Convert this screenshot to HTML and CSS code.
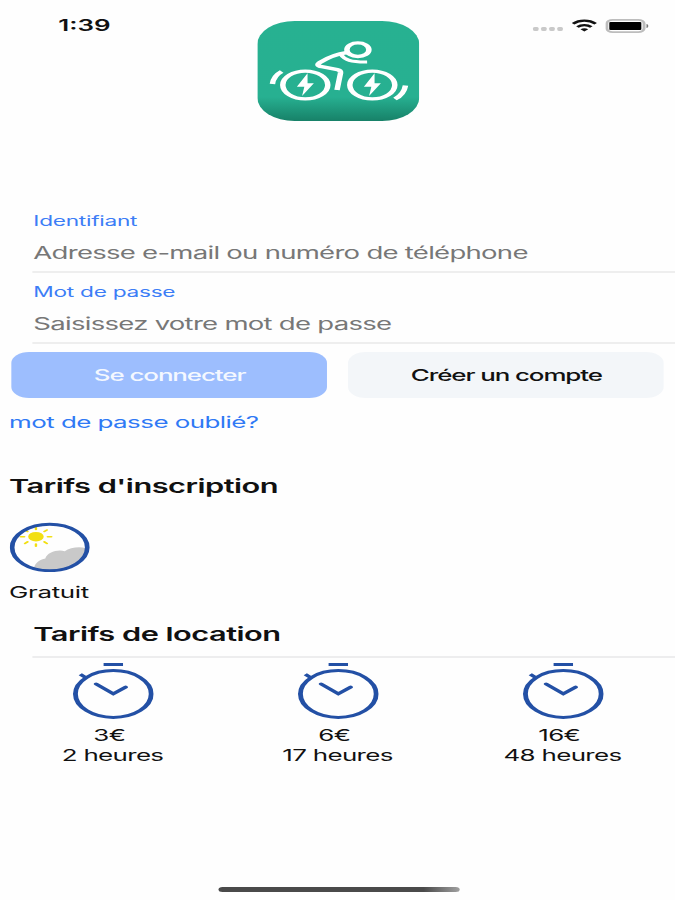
FILE: index.html
```html
<!DOCTYPE html>
<html lang="fr">
<head>
    <meta charset="UTF-8">
    <meta name="viewport" content="width=device-width, initial-scale=1.0">
    <title>Connexion</title>
    <link rel="stylesheet" href="styles.css">
</head>
<body>
    <!-- Shared icon -->
    <svg class="sprite">
        <symbol id="stopwatch" viewBox="0 0 50 58">
            <g fill="none" stroke="#2350a5">
                <circle cx="25" cy="32" r="23.4" stroke-width="3"/>
                <path d="M19 2.6h12" stroke-width="3"/>
                <path d="M4.600 12.300l4 4" stroke-width="2.800"/>
                <path d="M14.4 22L25 31.8l7.6-6.6" stroke-width="3" stroke-linecap="round"/>
            </g>
        </symbol>
    </svg>

    <div class="screen">
        <header>
            <div class="time">1:39</div>
            <svg class="logo" viewBox="0 0 100 100">
                <defs>
                    <linearGradient id="green" x1="0" y1="0" x2="0" y2="1">
                        <stop offset="0" stop-color="#27b191"/>
                        <stop offset="0.76" stop-color="#27b091"/>
                        <stop offset="1" stop-color="#178168"/>
                    </linearGradient>
                </defs>
                <rect width="100" height="100" rx="23" fill="url(#green)"/>
                <g fill="none" stroke="#fff" stroke-width="3.4">
                    <circle cx="29.6" cy="64" r="13.9"/>
                    <circle cx="71" cy="64" r="13.9"/>
                    <circle cx="62.1" cy="28.7" r="6.8"/>
                    <path d="M55.5 31.5C49 33 43 37 38.6 41.5c-2 2.2-1.4 3.4 1.2 4.2l9.6 3c1.7.6 2.1 1.6 2 3.2L49.2 69"/>
                    <path d="M51.5 33.5c2.5 5.500 6 7.700 16.300 7.500" stroke-width="2.900"/>
                    <path d="M15 50.500C11.500 53.500 9.800 57.500 9.300 63"/>
                    <path d="M91.500 64.500c-.6 6-2.800 10.500-6.500 13.500"/>
                </g>
                <path fill="#fff" d="M31 52.300l-6.600 13.400H29L27.600 75l7.300-12.700H31z"/>
                <path fill="#fff" d="M72.400 52.300l-6.600 13.400h4.600L69 75l7.300-12.700h-3.900z"/>
            </svg>
            <div class="status">
                <svg class="dots" viewBox="0 0 19 5">
                    <g fill="#c9c9c9">
                        <rect x="0.3" width="3.4" height="4" rx="1.2"/>
                        <rect x="5.3" width="3.4" height="4" rx="1.2"/>
                        <rect x="10.3" width="3.4" height="4" rx="1.2"/>
                        <rect x="15.3" width="3.4" height="4" rx="1.2"/>
                    </g>
                </svg>
                <svg class="wifi" viewBox="0 0 16 13">
                    <g fill="none" stroke="#111" stroke-width="2.2">
                        <path d="M1 4.700C5 .6 11 .6 15 4.700"/>
                        <path d="M3.700 8C6.200 5.500 9.800 5.500 12.300 8"/>
                    </g>
                    <path fill="#111" d="M8 12.600L5.600 10.200C7 9 9 9 10.400 10.200z"/>
                </svg>
                <svg class="battery" viewBox="0 0 27 14">
                    <rect x="0.9" y="0.9" width="23" height="12.2" rx="3.6" fill="#fff" stroke="#bdbdbd" stroke-width="1.8"/>
                    <rect x="2.4" y="3" width="19.800" height="8" rx="0.800" fill="#000"/>
                    <path fill="#777" d="M25.400 5c1.500.7 1.500 3.300 0 4z"/>
                </svg>
            </div>
        </header>

        <main>
            <!-- Login form -->
            <form>
                <div class="field">
                    <label>Identifiant</label>
                    <p>Adresse e-mail ou numéro de téléphone</p>
                </div>
                <div class="field">
                    <label>Mot de passe</label>
                    <p>Saisissez votre mot de passe</p>
                </div>
                <div class="buttons">
                    <button type="button" class="login">Se connecter</button>
                    <button type="button" class="signup">Créer un compte</button>
                </div>
                <a class="forgot" href="#">mot de passe oublié?</a>
            </form>

            <section class="inscription">
                <h2>Tarifs d'inscription</h2>
                <svg class="weather" viewBox="0 0 50 50">
                    <defs>
                        <clipPath id="disc"><circle cx="24.7" cy="25.5" r="23"/></clipPath>
                    </defs>
                    <g clip-path="url(#disc)">
                        <circle cx="16.200" cy="14.700" r="4.800" fill="#f2df12"/>
                        <g stroke="#f2df12" stroke-width="1.500" stroke-linecap="round">
                            <path d="M16.200 7.400V5.500M16.200 22v2.200M9 14.700H6.800M23.500 14.700h2.200M11 9.500L9.500 8M21.400 9.500L23 8M11 19.900l-1.600 1.600M21.400 19.900l1.600 1.600"/>
                        </g>
                        <path fill="#c9c9c9" d="M15 50c-.6-6 1.500-11.500 7-13.500 1-6 7.500-9.500 12-7.300 3-3.700 9-4.700 12.500-3.200L50 28v22z"/>
                    </g>
                    <circle cx="24.700" cy="25.500" r="23.200" fill="none" stroke="#2350a5" stroke-width="2.900"/>
                </svg>
                <p>Gratuit</p>
            </section>

            <section class="location">
                <h2>Tarifs de location</h2>
                <div class="rates">
                    <div class="rate">
                        <svg><use href="#stopwatch"/></svg>
                        <p class="price">3€</p>
                        <p>2 heures</p>
                    </div>
                    <div class="rate">
                        <svg><use href="#stopwatch"/></svg>
                        <p class="price">6€</p>
                        <p>17 heures</p>
                    </div>
                    <div class="rate">
                        <svg><use href="#stopwatch"/></svg>
                        <p class="price">16€</p>
                        <p>48 heures</p>
                    </div>
                </div>
            </section>
        </main>

        <div class="home-bar"></div>
    </div>
</body>
</html>
```
FILE: styles.css
```css
body, html {
    margin: 0;
    padding: 0;
    height: 100%;
    overflow: hidden;
    background: #fefefe;
}
* {
    box-sizing: border-box;
}
.sprite {
    display: none;
}
/* 417px wide phone screen, stretched sideways to 675px */
.screen {
    width: 417px;
    height: 900px;
    display: flex;
    flex-direction: column;
    transform: scaleX(1.6187);
    transform-origin: 0 0;
    font-family: Inter, 'Liberation Sans', sans-serif;
    font-size: 16px;
    color: #111;
    white-space: nowrap;
}
header {
    display: grid;
    grid-template-columns: 158.600px 100px 1fr;
    height: 208px;
    padding-top: 20px;
    align-items: start;
}
.time {
    padding-left: 36px;
    font-size: 16px;
    font-weight: 600;
    line-height: 11px;
}
.logo {
    width: 100px;
    height: 100px;
    margin-top: 1px;
}
.status {
    display: flex;
    justify-content: flex-end;
    align-items: center;
    height: 11px;
    padding-right: 16.500px;
}
.dots {
    width: 19px;
    height: 5px;
    margin-top: 8px;
}
.wifi {
    width: 16px;
    height: 13px;
    margin: 0 5px 0 5px;
}
.battery {
    width: 27px;
    height: 14px;
}
p, h2 {
    margin: 0;
}
.field {
    height: 71px;
    margin-left: 20px;
    padding-left: 0.600px;
    border-bottom: 2px solid #eeeeee;
}
.field:first-child {
    height: 65px;
}
.field label {
    display: block;
    padding-top: 1px;
    font-size: 14px;
    line-height: 24px;
    letter-spacing: -0.17px;
    color: #3c7df6;
}
.field:nth-child(2) label {
    padding-top: 7px;
}
.field p {
    font-size: 17px;
    line-height: 40px;
    letter-spacing: -0.45px;
    color: #777;
}
.buttons {
    display: flex;
    gap: 13px;
    margin: 8px 6.700px 0 7.300px;
}
button {
    flex: 1;
    height: 46px;
    padding: 0;
    border: none;
    border-radius: 11px;
    font-family: inherit;
    font-size: 16px;
    font-weight: 500;
    letter-spacing: -0.67px;
}
.login {
    background: #9dbefe;
    color: #f4f8ff;
}
.signup {
    background: #f3f6f9;
    color: #111;
}
.forgot {
    display: block;
    padding-left: 5.600px;
    line-height: 48px;
    letter-spacing: -0.33px;
    color: #2f79f5;
    text-decoration: none;
}
h2 {
    font-size: 19px;
    font-weight: 600;
    line-height: 24px;
    letter-spacing: -0.32px;
}
.inscription {
    padding: 29px 5.600px 0;
}
.weather {
    display: block;
    width: 50px;
    height: 50px;
    margin-top: 23px;
}
.inscription p {
    line-height: 24px;
    margin-top: 8px;
    letter-spacing: -0.2px;
}
.location h2 {
    height: 54px;
    margin-left: 20px;
    padding: 19px 0 0 0.600px;
    border-bottom: 2px solid #ededee;
}
.rates {
    display: grid;
    grid-template-columns: repeat(3, 1fr);
    padding-top: 4px;
}
.rate {
    text-align: center;
    line-height: 20px;
    letter-spacing: -0.4px;
}
.rate svg {
    display: block;
    width: 50px;
    height: 58px;
    margin: 0 auto 5px;
}
.price {
    padding-right: 4px;
}
.home-bar {
    width: 149px;
    height: 5px;
    margin: auto 0 8px 134.500px;
    border-radius: 3px;
    background: linear-gradient(90deg, #4a4a4a 85%, #a0a0a0 100%);
}
```
